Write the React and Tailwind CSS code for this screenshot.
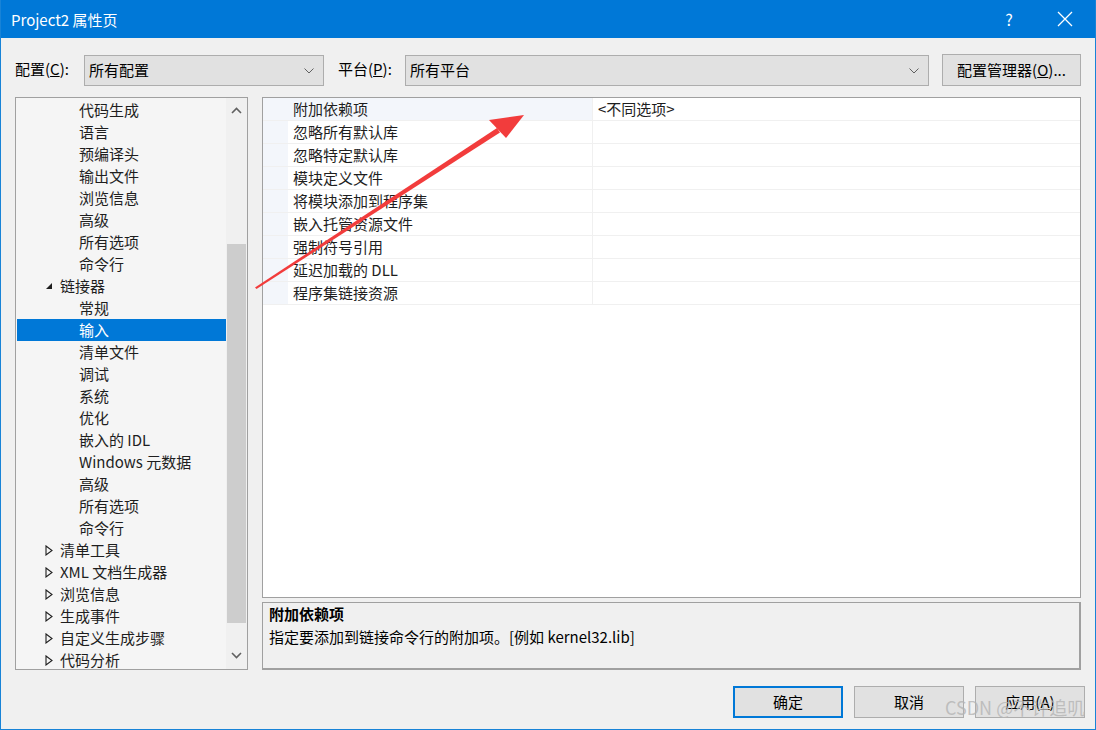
import React from 'react'

const font = { fontFamily: '"Noto Sans CJK SC", "Noto Sans", sans-serif' }

const treeItems = [
  { label: '代码生成', level: 2 },
  { label: '语言', level: 2 },
  { label: '预编译头', level: 2 },
  { label: '输出文件', level: 2 },
  { label: '浏览信息', level: 2 },
  { label: '高级', level: 2 },
  { label: '所有选项', level: 2 },
  { label: '命令行', level: 2 },
  { label: '链接器', level: 1, open: true },
  { label: '常规', level: 2 },
  { label: '输入', level: 2, selected: true },
  { label: '清单文件', level: 2 },
  { label: '调试', level: 2 },
  { label: '系统', level: 2 },
  { label: '优化', level: 2 },
  { label: '嵌入的 IDL', level: 2 },
  { label: 'Windows 元数据', level: 2 },
  { label: '高级', level: 2 },
  { label: '所有选项', level: 2 },
  { label: '命令行', level: 2 },
  { label: '清单工具', level: 1 },
  { label: 'XML 文档生成器', level: 1 },
  { label: '浏览信息', level: 1 },
  { label: '生成事件', level: 1 },
  { label: '自定义生成步骤', level: 1 },
  { label: '代码分析', level: 1 },
]

const props = [
  { name: '附加依赖项', value: '<不同选项>', active: true },
  { name: '忽略所有默认库', value: '' },
  { name: '忽略特定默认库', value: '' },
  { name: '模块定义文件', value: '' },
  { name: '将模块添加到程序集', value: '' },
  { name: '嵌入托管资源文件', value: '' },
  { name: '强制符号引用', value: '' },
  { name: '延迟加载的 DLL', value: '' },
  { name: '程序集链接资源', value: '' },
]

const Chevron = ({ up }) => (
  <svg width="11" height="7" viewBox="0 0 11 7" className="block">
    <path
      d={up ? 'M1 6 L5.5 1.5 L10 6' : 'M1 1 L5.5 5.5 L10 1'}
      fill="none"
      stroke="#606060"
      strokeWidth="1.6"
    />
  </svg>
)

const Combo = ({ text, width }) => (
  <div className={`${width} h-[31px] bg-[#e1e1e1] border border-[#adadad] flex items-center justify-between pl-[4px] pr-[9px] text-[15px] text-black`}>
    <span>{text}</span>
    <svg width="10" height="6" viewBox="0 0 10 6">
      <path d="M0.5 0.5 L5 5 L9.5 0.5" fill="none" stroke="#606060" strokeWidth="1" />
    </svg>
  </div>
)

const Expander = ({ open }) =>
  open ? (
    <svg width="8" height="8" viewBox="0 0 8 8" className="block">
      <path d="M7 1 L7 7 L1 7 Z" fill="#1e1e1e" />
    </svg>
  ) : (
    <svg width="8" height="11" viewBox="0 0 8 11" className="block">
      <path d="M1 1 L7 5.5 L1 10 Z" fill="none" stroke="#1e1e1e" strokeWidth="1.1" />
    </svg>
  )

const Button = ({ children, primary }) => (
  <button
    className={`w-[110px] h-[32px] bg-[#e1e1e1] text-[15px] text-black flex items-center justify-center ${
      primary ? 'border-2 border-[#0078d7]' : 'border border-[#adadad]'
    }`}
  >
    {children}
  </button>
)

export default function App() {
  return (
    <div className="relative w-[1096px] h-[730px] overflow-hidden bg-[#f0f0f0] flex flex-col border-x border-b border-[#1883d7]" style={font}>
      {/* Title bar */}
      <div className="h-[38px] shrink-0 bg-[#0078d7] flex items-center text-white">
        <span className="pl-[10px] text-[15px] leading-none">Project2 属性页</span>
        <div className="flex-1" />
        <span className="w-[20px] text-center text-[16px] mr-[38px]">?</span>
        <svg width="16" height="16" viewBox="0 0 16 16" className="mr-[22px]">
          <path d="M1 1 L15 15 M15 1 L1 15" stroke="white" strokeWidth="1.3" />
        </svg>
      </div>

      {/* Config row */}
      <div className="flex items-end pl-[14px] pr-[14px] mt-[16px] h-[32px] text-[15px] text-black">
        <span className="w-[69px] pb-[6px]">配置(<span className="underline">C</span>):</span>
        <Combo text="所有配置" width="w-[240px]" />
        <span className="ml-[14px] w-[67px] pb-[6px]">平台(<span className="underline">P</span>):</span>
        <Combo text="所有平台" width="w-[524px]" />
        <div className="flex-1" />
        <button className="w-[139px] h-[32px] bg-[#e1e1e1] border border-[#adadad] text-[15px] flex items-center justify-center">
          配置管理器(<span className="underline">O</span>)...
        </button>
      </div>

      {/* Main area */}
      <div className="flex pl-[14px] pr-[14px] mt-[11px] h-[573px] gap-[14px]">
        {/* Tree */}
        <div className="w-[233px] h-full border border-[#a0a0a0] bg-[#f5f5f5] flex">
          <div className="flex-1 overflow-hidden pt-[1px] pl-[1px]">
            {treeItems.map((item, i) => (
              <div
                key={i}
                className={`h-[22px] flex items-center text-[15px] leading-[22px] whitespace-nowrap ${
                  item.selected ? 'bg-[#0078d7] text-white' : 'text-[#1e1e1e]'
                }`}
              >
                {item.level === 1 ? (
                  <>
                    <span className="w-[28px] shrink-0" />
                    <span className="w-[15px] shrink-0 flex items-center">
                      <Expander open={item.open} />
                    </span>
                  </>
                ) : (
                  <span className="w-[62px] shrink-0" />
                )}
                <span>{item.label}</span>
              </div>
            ))}
          </div>
          <div className="w-[21px] h-full bg-[#f0f0f0] flex flex-col items-center">
            <div className="h-[22px] flex items-center justify-center pt-[2px]">
              <Chevron up />
            </div>
            <div className="w-full flex-1 pt-[124px] pb-[24px] pl-[1px] pr-[1px] flex flex-col">
              <div className="flex-1 bg-[#cdcdcd]" />
            </div>
            <div className="h-[22px] flex items-center justify-center pb-[6px]">
              <Chevron />
            </div>
          </div>
        </div>

        {/* Right column */}
        <div className="flex-1 flex flex-col gap-[4px]">
          <div className="h-[502px] border border-[#a0a0a0] bg-white">
            {props.map((p, i) => (
              <div key={i} className="h-[23px] flex border-b border-[#f0f0f0] text-[15px] leading-[22px] text-[#1e1e1e]">
                <div className="w-[25px] shrink-0 bg-[#f3f6fb]" />
                <div className={`w-[305px] shrink-0 pl-[5px] whitespace-nowrap border-r border-[#f0f0f0] ${p.active ? 'bg-[#f3f6fb]' : 'bg-white'}`}>
                  {p.name}
                </div>
                <div className="flex-1 pl-[5px]">{p.value}</div>
              </div>
            ))}
          </div>
          <div className="h-[68px] border border-[#a0a0a0] border-b-2 border-r-2 bg-[#f0f0f0] pl-[6px] text-[15px] text-black">
            <div className="font-bold leading-[22px]">附加依赖项</div>
            <div className="leading-[23px]">指定要添加到链接命令行的附加项。[例如 kernel32.lib]</div>
          </div>
        </div>
      </div>

      {/* Buttons */}
      <div className="flex justify-end gap-[11px] pr-[10px] mt-[16px]">
        <Button primary>确定</Button>
        <Button>取消</Button>
        <Button>
          应用(<span className="underline">A</span>)
        </Button>
      </div>

      {/* Watermark */}
      <div className="absolute left-[944px] top-[698px] text-[18px] leading-none text-[#b4b4b4]/80 whitespace-nowrap pointer-events-none">
        CSDN @不许追叽
      </div>

      {/* Annotation arrow */}
      <svg className="absolute left-0 top-0 pointer-events-none" width="1096" height="730">
        <path d="M254 287.5 L496 128 L499 132.5 L255.5 289 Z" fill="#f23c3c" />
        <path d="M523 115 L488 120 L505 138 Z" fill="#f23c3c" />
      </svg>
    </div>
  )
}
